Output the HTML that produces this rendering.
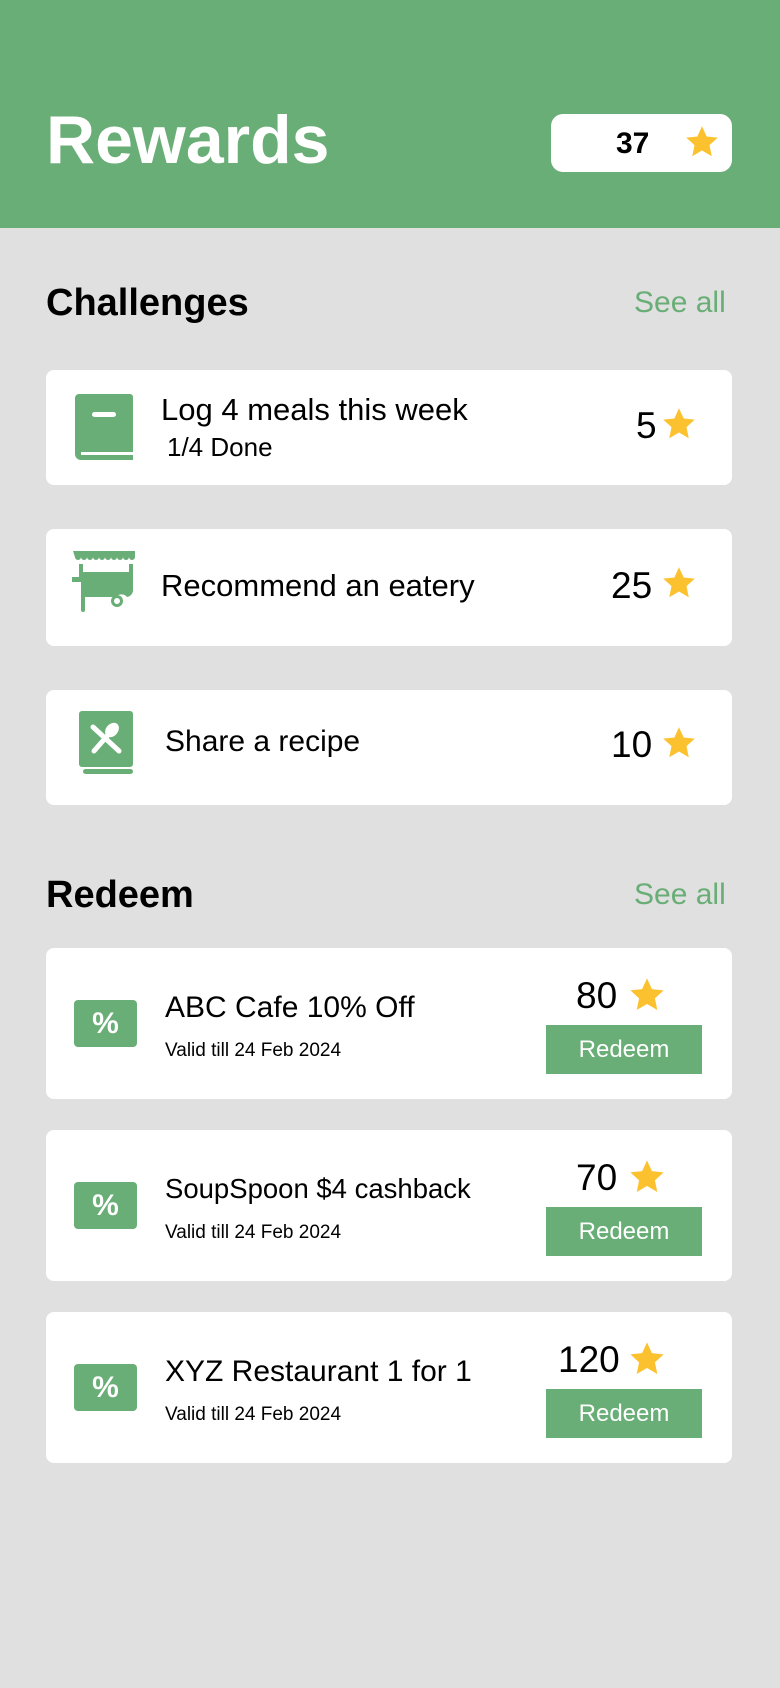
<!DOCTYPE html>
<html><head><meta charset="utf-8"><style>
*{margin:0;padding:0;box-sizing:border-box}
body{width:780px;height:1688px;background:#e0e0e0;font-family:"Liberation Sans",sans-serif;position:relative;overflow:hidden;color:#000}
.a{position:absolute}
.hdr{left:0;top:0;width:780px;height:228px;background:#69ae76}
.card{position:absolute;left:46px;width:686px;background:#fff;border-radius:8px}
.t{position:absolute;white-space:nowrap;line-height:1}
.star{position:absolute}
.btn{position:absolute;left:500px;top:77px;width:156px;height:49px;background:#69ae76;color:#fff;font-size:24px;text-align:center;line-height:49px}
.pct{position:absolute;left:28px;top:52px;width:63px;height:47px;background:#69ae76;border-radius:4px;color:#fff;font-weight:bold;font-size:30px;text-align:center;line-height:47px}
</style></head><body>
<svg width="0" height="0" style="position:absolute"><defs><symbol id="s" viewBox="0 0 24 24"><polygon points="12,1.5 15.1,8.3 22.5,9.1 17,14.1 18.5,21.5 12,17.7 5.5,21.5 7,14.1 1.5,9.1 8.9,8.3" fill="#fcc12e"/></symbol></defs></svg>
<div class="a hdr"></div>
<div class="t" style="left:46px;top:106px;font-size:68px;font-weight:bold;color:#fff">Rewards</div>
<div class="a" style="left:551px;top:114px;width:181px;height:58px;background:#fff;border-radius:12px"></div>
<div class="t" style="left:616px;top:129px;font-size:30px;font-weight:bold">37</div>
<svg class="star" style="left:684px;top:124px" width="36" height="36"><use href="#s"/></svg>

<div class="t" style="left:46px;top:284px;font-size:38px;font-weight:bold">Challenges</div>
<div class="t" style="left:634px;top:288px;font-size:30px;color:#69ae76">See all</div>

<div class="card" style="top:370px;height:115px">
 <svg class="a" style="left:29px;top:24px" width="60" height="70" viewBox="0 0 60 70"><path d="M4 0H55a3 3 0 0 1 3 3V58H10a4 4 0 0 0 0 2H58V66H6a6 6 0 0 1-6-6V4a4 4 0 0 1 4-4z" fill="#69ae76"/><rect x="17" y="18" width="24" height="5" rx="2.5" fill="#fff"/><rect x="6" y="58" width="52" height="3" fill="#fff"/></svg>
 <div class="t" style="left:115px;top:24px;font-size:31px">Log 4 meals this week</div>
 <div class="t" style="left:121px;top:64px;font-size:26px">1/4 Done</div>
 <div class="t" style="left:590px;top:37px;font-size:37px">5</div>
 <svg class="star" style="left:615px;top:36px" width="36" height="36"><use href="#s"/></svg>
</div>

<div class="card" style="top:529px;height:117px">
 <svg class="a" style="left:24px;top:22px" width="68" height="64" viewBox="0 0 68 64"><path d="M3 0H65V6a3 3 0 0 1-6 0 3 3 0 0 1-6 0 3 3 0 0 1-6 0 3 3 0 0 1-6 0 3 3 0 0 1-6 0 3 3 0 0 1-6 0 3 3 0 0 1-6 0 3 3 0 0 1-6 0 3 3 0 0 1-6 0 3 3 0 0 1-6 0z" fill="#69ae76"/><path d="M9 13h4v8h46v-8h4v26a7 7 0 0 1-6 7 7 7 0 0 0-11 0H15v13a2 2 0 0 1-4 0V31H2v-5h7z" fill="#69ae76"/><circle cx="47" cy="50" r="6" fill="#69ae76"/><circle cx="47" cy="50" r="3" fill="#fff"/></svg>
 <div class="t" style="left:115px;top:41px;font-size:31px">Recommend an eatery</div>
 <div class="t" style="left:565px;top:38px;font-size:37px">25</div>
 <svg class="star" style="left:615px;top:36px" width="36" height="36"><use href="#s"/></svg>
</div>

<div class="card" style="top:690px;height:115px">
 <svg class="a" style="left:33px;top:21px" width="56" height="66" viewBox="0 0 56 66"><rect x="0" y="0" width="54" height="56" rx="3" fill="#69ae76"/><rect x="4" y="58" width="50" height="5" rx="2.5" fill="#69ae76"/><path d="M14 16l26 24" stroke="#fff" stroke-width="5" stroke-linecap="round"/><ellipse cx="33" cy="19" rx="6" ry="8" transform="rotate(40 33 19)" fill="#fff"/><path d="M29 24L15 40" stroke="#fff" stroke-width="5" stroke-linecap="round"/></svg>
 <div class="t" style="left:119px;top:37px;font-size:30px">Share a recipe</div>
 <div class="t" style="left:565px;top:36px;font-size:37px">10</div>
 <svg class="star" style="left:615px;top:35px" width="36" height="36"><use href="#s"/></svg>
</div>

<div class="t" style="left:46px;top:876px;font-size:38px;font-weight:bold">Redeem</div>
<div class="t" style="left:634px;top:880px;font-size:30px;color:#69ae76">See all</div>

<div class="card" style="top:948px;height:151px">
 <div class="pct">%</div>
 <div class="t" style="left:119px;top:45px;font-size:30px">ABC Cafe 10% Off</div>
 <div class="t" style="left:119px;top:93px;font-size:19px">Valid till 24 Feb 2024</div>
 <div class="t" style="left:530px;top:29px;font-size:37px">80</div>
 <svg class="star" style="left:582px;top:28px" width="38" height="38"><use href="#s"/></svg>
 <div class="btn">Redeem</div>
</div>

<div class="card" style="top:1130px;height:151px">
 <div class="pct">%</div>
 <div class="t" style="left:119px;top:45px;font-size:27.5px">SoupSpoon $4 cashback</div>
 <div class="t" style="left:119px;top:93px;font-size:19px">Valid till 24 Feb 2024</div>
 <div class="t" style="left:530px;top:29px;font-size:37px">70</div>
 <svg class="star" style="left:582px;top:28px" width="38" height="38"><use href="#s"/></svg>
 <div class="btn">Redeem</div>
</div>

<div class="card" style="top:1312px;height:151px">
 <div class="pct">%</div>
 <div class="t" style="left:119px;top:45px;font-size:30px">XYZ Restaurant 1 for 1</div>
 <div class="t" style="left:119px;top:93px;font-size:19px">Valid till 24 Feb 2024</div>
 <div class="t" style="left:512px;top:29px;font-size:37px">120</div>
 <svg class="star" style="left:582px;top:28px" width="38" height="38"><use href="#s"/></svg>
 <div class="btn">Redeem</div>
</div>
</body></html>
